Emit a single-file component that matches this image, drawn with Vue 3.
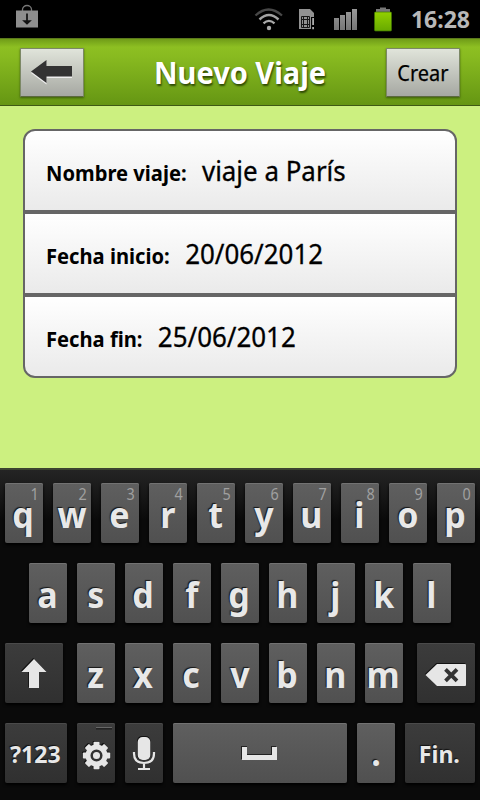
<script setup>
const fields = [
  { label: 'Nombre viaje:', value: 'viaje a París' },
  { label: 'Fecha inicio:', value: '20/06/2012' },
  { label: 'Fecha fin:', value: '25/06/2012' },
]
const topRow = [...'qwertyuiop'].map((letter, i) => ({ letter, hint: (i + 1) % 10 }))
const homeRow = [...'asdfghjkl']
const bottomRow = [...'zxcvbnm']
const teeth = [0, 45, 90, 135, 180, 225, 270, 315]
</script>

<template>
  <div class="phone">
    <div class="status">
      <svg class="download" width="24" height="26" viewBox="0 0 24 26">
        <path d="M7.500 7V5.500a4.500 4 0 0 1 9 0V7" fill="none" stroke="#777" stroke-width="1.300" />
        <path d="M1 6.500h22v17H1z" fill="#8e8e8e" />
        <path d="M12 9.500v8M9.300 17h5.400L12 19.500z" fill="#111" stroke="#111" stroke-width="1.700" />
      </svg>
      <svg class="indicators" width="150" height="38" viewBox="0 0 150 38">
        <g fill="none" stroke-linecap="butt">
          <path d="M5.500 15.500Q18.500 3.500 32 15.500" stroke="#484848" stroke-width="2.200" />
          <path d="M9.500 19.500Q18.900 10.500 28.500 19.500" stroke="#a2a2a2" stroke-width="2.500" />
          <path d="M13.500 23.300Q18.900 18.500 24.500 23.300" stroke="#aaa" stroke-width="2.300" />
        </g>
        <circle cx="19" cy="28" r="2.200" fill="#aaa" />
        <path d="M49 9h11l4 4v4h-2v12H49z" fill="#929292" />
        <path d="M51.500 16.500h8v11h-8zM53.500 16.500v11M57.500 16.500v11M51.500 19.500h8M51.500 24.500h8" fill="none" stroke="#171717" />
        <path d="M61 17h4v13h-4z" fill="#000" />
        <path d="M62.200 18h1.800v7h-1.800zM62.200 27h1.800v2.300h-1.800z" fill="#aaa" />
        <path d="M84 18h5v12h-5zM90 15h5v15h-5zM96 12h5v18h-5zM102 9h5v21h-5z" fill="url(#bars)" />
        <path d="M126 12V9h4V7.500h6V9h4v3z" fill="#777" />
        <rect x="124.500" y="12" width="17" height="19" rx="1" fill="url(#battery)" stroke="#3e7400" stroke-width=".7" />
        <defs>
          <linearGradient id="bars" x1="0" y1="0" x2="0" y2="1"><stop stop-color="#999" /><stop offset="1" stop-color="#767676" /></linearGradient>
          <linearGradient id="battery" x1="0" y1="0" x2="0" y2="1"><stop stop-color="#92d000" /><stop offset="1" stop-color="#67a900" /></linearGradient>
        </defs>
      </svg>
      <span class="clock">16:28</span>
    </div>

    <header class="bar">
      <button class="btn back" aria-label="Atrás">
        <svg width="42" height="26" viewBox="0 0 42 26">
          <path d="M0 12.500 15.500 1v6H41v10.500H15.500V24z" fill="#eee" transform="translate(0 1.500)" />
          <path d="M0 12.500 15.500 1v6H41v10.500H15.500V24z" fill="#333" />
        </svg>
      </button>
      <h1>Nuevo Viaje</h1>
      <button class="btn create"><span>Crear</span></button>
    </header>

    <main class="content">
      <div v-for="f in fields" :key="f.label" class="field">
        <div class="line">
          <label>{{ f.label }}</label>
          <span class="value">{{ f.value }}</span>
        </div>
      </div>
    </main>

    <section class="keyboard">
      <div class="keys">
        <div v-for="k in topRow" :key="k.letter" class="key">
          <span class="hint">{{ k.hint }}</span><span class="glyph">{{ k.letter }}</span>
        </div>
      </div>
      <div class="keys">
        <div v-for="k in homeRow" :key="k" class="key"><span class="glyph">{{ k }}</span></div>
      </div>
      <div class="keys spread">
        <div class="key dark wide">
          <svg width="58" height="60" viewBox="0 0 58 60">
            <path d="M29 16 41.500 29H34v16H24V29h-7.500z" fill="#111" transform="translate(-.8 -1)" />
            <path d="M29 16 41.500 29H34v16H24V29h-7.500z" fill="#e6e6e6" />
          </svg>
        </div>
        <div class="letters">
          <div v-for="k in bottomRow" :key="k" class="key"><span class="glyph">{{ k }}</span></div>
        </div>
        <div class="key dark wide">
          <svg width="58" height="60" viewBox="0 0 58 60">
            <path d="M8.500 32 20 21h28q1 0 1 1v20q0 1-1 1H20z" fill="#111" transform="translate(-.6 -1)" />
            <path d="M8.500 32 20 21h28q1 0 1 1v20q0 1-1 1H20z" fill="#e6e6e6" />
            <path d="m28.500 26.300 11.500 11.500M40 26.300 28.500 37.800" stroke="#333" stroke-width="3.800" />
          </svg>
        </div>
      </div>
      <div class="keys">
        <div class="key dark symbols"><span class="word">?123</span></div>
        <div class="key dark">
          <svg width="38" height="60" viewBox="0 0 38 60">
            <path d="M19 4.500h16" stroke="#666" stroke-width="1" />
            <path d="M19 5.800h16" stroke="#222" stroke-width="1.500" />
            <g transform="translate(18.800 31.600)" fill="#111">
              <circle r="10.800" />
              <rect v-for="a in teeth" :key="a" x="-3.200" y="-13.700" width="6.400" height="8" rx="1" :transform="`rotate(${a})`" />
            </g>
            <g transform="translate(19.500 32.500)" fill="#e6e6e6">
              <circle r="11" />
              <rect v-for="a in teeth" :key="a" x="-3" y="-13.700" width="6" height="8" rx="1" :transform="`rotate(${a})`" />
              <circle r="4.800" stroke="#333" stroke-width="2.500" />
            </g>
          </svg>
        </div>
        <div class="key dark">
          <svg width="38" height="60" viewBox="0 0 38 60">
            <rect x="12" y="13" width="13.500" height="24" rx="5" fill="#111" />
            <rect x="12.700" y="14" width="12.600" height="23" rx="5" fill="#e6e6e6" />
            <path d="M9 29v1.500q0 9.500 10 9.500t10-9.500V29M19 40v6M13 46h12" fill="none" stroke="#e6e6e6" stroke-width="2.200" />
          </svg>
        </div>
        <div class="key space">
          <svg width="38" height="16" viewBox="0 0 38 16">
            <path d="M0 1h6v8h24V1h5v13H0z" fill="#222" />
            <path d="M1 2h5v8h25V2h5v13H1z" fill="#e6e6e6" />
          </svg>
        </div>
        <div class="key"><span class="glyph period">.</span></div>
        <div class="key dark done"><span class="word">Fin.</span></div>
      </div>
    </section>
  </div>
</template>

<style>
body { margin: 0; background: #000; }
</style>

<style scoped>
* { box-sizing: border-box; }
.phone {
  width: 480px; height: 800px; overflow: hidden;
  display: flex; flex-direction: column;
  background: #ccf080;
  font-family: "Noto Sans", "Open Sans", sans-serif;
}
.status {
  height: 38px; flex: none; display: flex; align-items: center;
  background: #000; padding: 0 10px 0 15px;
}
.download { margin-top: -5px; }
.indicators { margin-left: 211px; flex: none; }
.clock {
  margin-left: auto; color: #b8b8b8; font-size: 23px; font-weight: 700; line-height: 38px;
}
.bar {
  height: 68px; flex: none; display: flex; align-items: center; justify-content: space-between;
  padding: 1px 20px 0;
  border-top: 1px solid #5c7a1c; border-bottom: 1px solid #3f5a14;
  background: linear-gradient(#709c18 0, #8dbf22 8px, #88ba20 18px, #659613 100%);
}
h1 {
  margin: 0 0 0 11px; font-size: 30px; line-height: 40px; font-weight: 700; color: #fff;
  text-shadow: 1px 2px 2px #2f4a05; white-space: nowrap; transform: scaleX(.966);
}
.btn {
  height: 49px; padding: 0; border: 1px solid #7c8866; border-bottom-color: #5c693f;
  background: linear-gradient(#e0e4da, #a6a8a2); font-family: inherit; color: #000;
  box-shadow: 0 1px 2px rgba(30, 50, 0, .6);
  display: flex; align-items: center; justify-content: center;
}
.back { width: 64px; }
.back svg { margin-top: -1px; }
.create { width: 74px; font-size: 21px; }
.create span { transform: scaleX(.95); -webkit-text-stroke: .25px #000; }
.content { flex: none; height: 362px; padding: 23px; }
.field {
  height: 83px; border: 2px solid #666; padding: 0 21px;
  background: linear-gradient(#fff, #eaeaea);
}
.field:first-child { border-radius: 12px 12px 0 0; }
.field:last-child { border-radius: 0 0 12px 12px; }
.line {
  display: flex; align-items: baseline; gap: 16px; line-height: 79px;
  transform: scaleX(.96); transform-origin: left;
}
label { font-size: 21px; font-weight: 700; white-space: nowrap; }
.value { font-size: 27px; white-space: nowrap; -webkit-text-stroke: .3px #000; }
.keyboard {
  flex: 1; padding: 13px 5px 0; display: flex; flex-direction: column; gap: 20px;
  border-top: 2px solid #3c4330;
  background: linear-gradient(#242424, #0a0a0a 50px);
}
.keys, .letters { display: flex; justify-content: center; gap: 10px; }
.spread { justify-content: space-between; gap: 0; }
.key {
  position: relative; width: 38px; height: 60px; flex: none; border-radius: 2px;
  display: flex; align-items: center; justify-content: center;
  background: linear-gradient(#5f5f5f, #505050); color: #e8e8e8;
  box-shadow: 0 2px 3px #000, inset 0 1px #727272;
}
.key svg { flex: none; }
.dark { background: linear-gradient(#3c3c3c, #303030); box-shadow: 0 2px 3px #000, inset 0 1px #4a4a4a; }
.wide { width: 58px; }
.symbols { width: 62px; }
.space { width: 174px; }
.done { width: 70px; }
.glyph { font-size: 35px; font-weight: 700; line-height: 36px; margin: 4px 1px 0 0; text-shadow: -1px -1px 1px #161616; transform: scaleX(.97); }
.period { margin-top: -1px; }
.word { font-size: 24px; font-weight: 700; margin-right: 1px; text-shadow: -1px -1px 1px #111; transform: scaleX(.96); }
.hint { position: absolute; top: 2px; right: 4px; font-size: 16px; line-height: 18px; color: #a0a0a0; transform: scaleX(.9); }
</style>
